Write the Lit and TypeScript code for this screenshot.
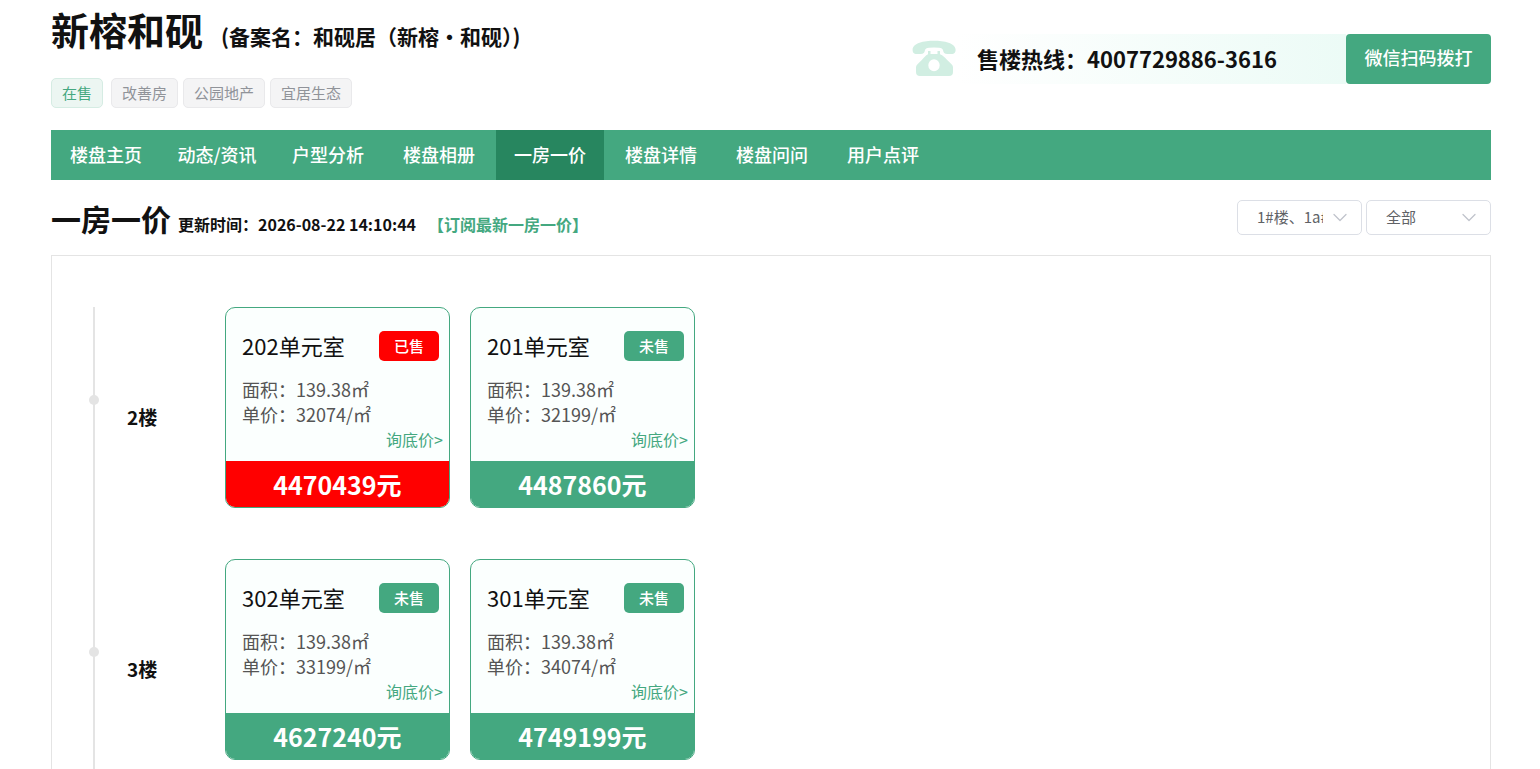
import { LitElement, html, css } from "lit";
import { customElement, property } from "lit/decorators.js";

interface Room {
  name: string;
  area: string;
  unit: string;
  total: string;
  sold: boolean;
}

interface Floor {
  label: string;
  rooms: Room[];
}

const NAV = ["楼盘主页", "动态/资讯", "户型分析", "楼盘相册", "一房一价", "楼盘详情", "楼盘问问", "用户点评"];
const ACTIVE = "一房一价";
const FEATURES = ["改善房", "公园地产", "宜居生态"];

const FLOORS: Floor[] = [
  {
    label: "2楼",
    rooms: [
      { name: "202单元室", area: "139.38㎡", unit: "32074/㎡", total: "4470439元", sold: true },
      { name: "201单元室", area: "139.38㎡", unit: "32199/㎡", total: "4487860元", sold: false },
    ],
  },
  {
    label: "3楼",
    rooms: [
      { name: "302单元室", area: "139.38㎡", unit: "33199/㎡", total: "4627240元", sold: false },
      { name: "301单元室", area: "139.38㎡", unit: "34074/㎡", total: "4749199元", sold: false },
    ],
  },
];

@customElement("room-card")
export class RoomCard extends LitElement {
  @property({ attribute: false }) room!: Room;

  static styles = css`
    :host {
      display: block;
      width: 225px;
    }
    .card {
      border: 1px solid #44a880;
      border-radius: 10px;
      background: #fbfffe;
      overflow: hidden;
    }
    .head {
      display: flex;
      align-items: flex-start;
      justify-content: space-between;
      padding: 23px 10px 16px 16px;
    }
    .name {
      margin: 0;
      font-size: 22px;
      line-height: 28px;
      font-weight: 400;
      color: #111;
    }
    .badge {
      width: 60px;
      border-radius: 5px;
      background: #44a880;
      color: #fff;
      font-size: 15px;
      line-height: 30px;
      font-weight: 500;
      text-align: center;
    }
    .facts {
      padding-left: 16px;
      font-size: 18px;
      line-height: 25px;
      color: #555;
    }
    .ask {
      display: block;
      padding: 0 6px 10px 0;
      font-size: 16px;
      line-height: 24px;
      text-align: right;
      color: #44a880;
      text-decoration: none;
    }
    .total {
      background: #44a880;
      color: #fff;
      font-size: 25px;
      line-height: 46px;
      font-weight: 700;
      text-align: center;
    }
    .sold {
      background: #f00;
    }
  `;

  render() {
    const r = this.room;
    const sold = r.sold ? "sold" : "";
    return html`
      <article class="card">
        <div class="head">
          <h3 class="name">${r.name}</h3>
          <span class="badge ${sold}">${r.sold ? "已售" : "未售"}</span>
        </div>
        <div class="facts">
          <div>面积：${r.area}</div>
          <div>单价：${r.unit}</div>
        </div>
        <a class="ask" href="#">询底价&gt;</a>
        <div class="total ${sold}">${r.total}</div>
      </article>
    `;
  }
}

@customElement("app-root")
export class AppRoot extends LitElement {
  static styles = css`
    :host {
      display: flex;
      flex-direction: column;
      box-sizing: border-box;
      min-height: 100vh;
      padding: 0 49px 0 51px;
      background: #fff;
      color: #111;
      font-family: "Noto Sans CJK SC", sans-serif;
    }
    a {
      color: inherit;
      text-decoration: none;
    }
    .top {
      display: flex;
      justify-content: space-between;
      align-items: flex-start;
      height: 130px;
    }
    .title {
      display: flex;
      align-items: baseline;
      gap: 18px;
      margin: 0;
      padding-bottom: 13px;
      font-size: 38px;
      line-height: 58px;
      font-weight: 700;
    }
    .alias {
      font-size: 21px;
      font-weight: 700;
    }
    .tags {
      display: flex;
      gap: 5px;
    }
    .tag {
      padding: 0 10px;
      border: 1px solid #e9e9eb;
      border-radius: 5px;
      background: #f4f4f5;
      color: #909399;
      font-size: 15px;
      line-height: 28px;
    }
    .tag.state {
      margin-right: 3px;
      border-color: #d5ece3;
      background: #ecf6f2;
      color: #44a880;
    }
    .hotline {
      display: flex;
      align-items: center;
      margin-top: 34px;
    }
    .phone {
      width: 44px;
      height: 36px;
      padding-bottom: 2px;
    }
    .number {
      width: 369px;
      padding: 0 0 2px 21px;
      background: linear-gradient(90deg, #fff, #ecfbf6);
      font-size: 22px;
      line-height: 48px;
      font-weight: 700;
      white-space: nowrap;
    }
    .scan {
      width: 145px;
      height: 50px;
      padding: 0 0 4px;
      border: 0;
      border-radius: 4px;
      background: #44a880;
      color: #fff;
      font: inherit;
      font-size: 18px;
      font-weight: 500;
    }
    .nav {
      display: flex;
      gap: 3px;
      padding-left: 1px;
      background: #44a880;
      color: #fff;
    }
    .nav-item {
      width: 108px;
      padding-bottom: 2px;
      font-size: 18px;
      line-height: 48px;
      font-weight: 500;
      text-align: center;
      white-space: nowrap;
    }
    .nav-item.active {
      background: #27865f;
    }
    .section {
      display: flex;
      justify-content: space-between;
      align-items: center;
      height: 75px;
    }
    .heading {
      display: flex;
      align-items: baseline;
      font-size: 16px;
      font-weight: 700;
    }
    .heading h2 {
      margin: 0 7px 0 0;
      font-size: 30px;
      line-height: 44px;
    }
    .subscribe {
      margin-left: 12px;
      color: #44a880;
    }
    .filters {
      display: flex;
      gap: 4px;
    }
    .filter {
      display: flex;
      align-items: center;
      position: relative;
    }
    .filter select {
      appearance: none;
      box-sizing: border-box;
      width: 125px;
      height: 35px;
      padding: 0 38px 2px 19px;
      border: 1px solid #dcdfe6;
      border-radius: 5px;
      background: #fff;
      color: #606266;
      font: inherit;
      font-size: 15px;
      text-overflow: clip;
    }
    .filter svg {
      position: absolute;
      right: 15px;
      width: 14px;
      height: 14px;
      pointer-events: none;
    }
    .panel {
      flex: 1;
      display: flex;
      flex-direction: column;
      padding: 51px 37px 0;
      border: 1px solid #e4e4e4;
      border-bottom: 0;
    }
    .floors {
      flex: 1;
      margin: 0 0 0 4px;
      padding: 0;
      border-left: 2px solid #e4e4e4;
      list-style: none;
    }
    .floor {
      position: relative;
      display: flex;
      padding-bottom: 51px;
    }
    .floor:last-child {
      padding-bottom: 0;
    }
    .floor::before {
      content: "";
      position: absolute;
      left: -6px;
      top: 88px;
      width: 10px;
      height: 10px;
      border-radius: 50%;
      background: #e4e4e4;
    }
    .label {
      width: 98px;
      margin: 0;
      padding: 97px 0 0 32px;
      font-size: 19px;
      line-height: 26px;
      font-weight: 700;
    }
    .rooms {
      display: flex;
      flex-wrap: wrap;
      gap: 20px;
    }
  `;

  private chevron() {
    return html`<svg viewBox="0 0 14 14" aria-hidden="true">
      <path d="M1 3.500 L7 9.500 L13 3.500" fill="none" stroke="#c0c4cc" stroke-width="1.3" stroke-linecap="round" stroke-linejoin="round" />
    </svg>`;
  }

  render() {
    return html`
      <header class="top">
        <div>
          <h1 class="title">新榕和砚 <span class="alias">(备案名：和砚居（新榕・和砚）)</span></h1>
          <div class="tags">
            <span class="tag state">在售</span>
            ${FEATURES.map((t) => html`<span class="tag">${t}</span>`)}
          </div>
        </div>
        <div class="hotline">
          <svg class="phone" viewBox="0 0 44 36" aria-hidden="true">
            <path fill="#d1eee2" d="M22 .7C32 .7 43.6 3 43.6 9.8c0 3.2-1.6 4.2-4 4.2h-4.200c-3 0-4-1.200-4.200-3.200-.2-2.300-2-3-4.200-3.100Q22 7.400 17 7.700c-2.200.1-4 .8-4.200 3.100-.2 2-1.200 3.200-4.200 3.200H4.600C2.200 14 .6 13 .6 9.800.6 3 12 .7 22 .7Z" />
            <path fill="#d1eee2" fill-rule="evenodd" d="M16 11h2.500v3h7v-3H28v3.200c3 1 5 3.600 7.200 5.800l4.300 4.200c1 1 1.500 2 1.500 3.400V32q0 4-4 4H8q-4 0-4-4v-4.400c0-1.400.5-2.400 1.500-3.400l4.300-4.200c2.200-2.200 3.700-4.800 6.200-5.800ZM22 19.300a5.700 6 0 1 0 0 12a5.700 6 0 1 0 0-12Z" />
          </svg>
          <div class="number">售楼热线：4007729886-3616</div>
          <button class="scan" type="button">微信扫码拨打</button>
        </div>
      </header>

      <nav class="nav">
        ${NAV.map((n) => html`<a class="nav-item ${n === ACTIVE ? "active" : ""}" href="#">${n}</a>`)}
      </nav>

      <div class="section">
        <div class="heading">
          <h2>一房一价</h2>
          <span>更新时间：2026-08-22 14:10:44</span>
          <a class="subscribe" href="#">【订阅最新一房一价】</a>
        </div>
        <div class="filters">
          <label class="filter">
            <select aria-label="楼栋"><option>1#楼、1a#楼</option></select>
            ${this.chevron()}
          </label>
          <label class="filter">
            <select aria-label="状态"><option>全部</option></select>
            ${this.chevron()}
          </label>
        </div>
      </div>

      <main class="panel">
        <ul class="floors">
          ${FLOORS.map(
            (f) => html`<li class="floor">
              <h3 class="label">${f.label}</h3>
              <div class="rooms">${f.rooms.map((r) => html`<room-card .room=${r}></room-card>`)}</div>
            </li>`
          )}
        </ul>
      </main>
    `;
  }
}
